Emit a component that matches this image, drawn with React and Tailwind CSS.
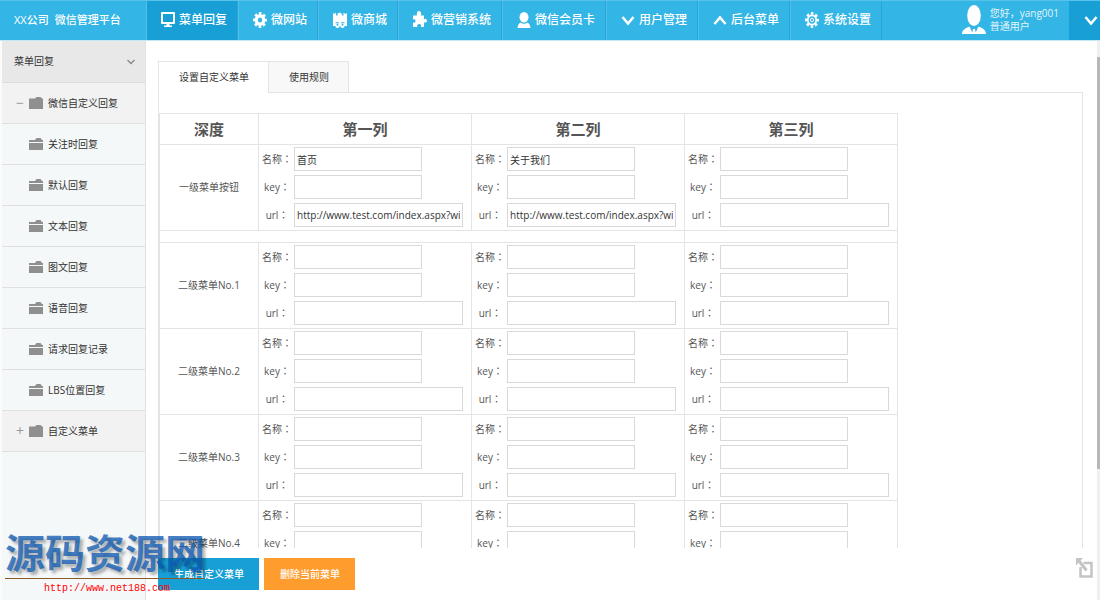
import React, { useState } from 'react';
import clsx from 'clsx';

const GearIcon = ({ thin }) => (
    <svg viewBox="0 0 16 16" className="h-4 w-3.5 shrink-0" preserveAspectRatio="none" fill="none" stroke="currentColor" aria-hidden="true">
        <circle cx="8" cy="8" r={thin ? 4.8 : 4.3} strokeWidth={thin ? 2 : 3.6} />
        {thin && <circle cx="8" cy="8" r="1.800" strokeWidth="1" />}
        <circle cx="8" cy="8" r="6.700" strokeWidth="2.500" strokeDasharray="2.900 2.362" strokeDashoffset="1.450" />
    </svg>
);

const MonitorIcon = () => (
    <svg viewBox="0 0 14 16" className="h-4 w-3.5 shrink-0" fill="currentColor" aria-hidden="true">
        <path fillRule="evenodd" d="M1 0h12a1 1 0 0 1 1 1v10a1 1 0 0 1-1 1H1a1 1 0 0 1-1-1V1a1 1 0 0 1 1-1zm1 2v8h10V2z" />
        <path d="M5.500 12h3v1.500H11q.5 1.500-1 1.500H4q-1.500 0-1-1.500h2.500z" />
    </svg>
);

const ShopIcon = () => (
    <svg viewBox="0 0 14 16" className="h-4 w-3.5 shrink-0" fill="currentColor" aria-hidden="true">
        <path d="M0 1l1.500 1L3 .5v3h1.500V1.500L7 .5l2 1.500v1.500h1.500V.5L12.500 2 14 1v13H0z" />
        <circle cx="4.500" cy="13.800" r="2.200" />
        <circle cx="9.500" cy="13.800" r="2.200" />
        <g fill="#33b5e5">
            <path d="M2.500 10.300h3.500v1H2.500zM8 10.300h3.500v1H8z" />
            <circle cx="4.500" cy="12.800" r="1" />
            <circle cx="9.500" cy="12.800" r="1" />
        </g>
    </svg>
);

const PuzzleIcon = () => (
    <svg viewBox="0 0 14 17" className="h-[17px] w-3.5 shrink-0" fill="currentColor" aria-hidden="true">
        <path d="M0 4.500h4.200C3.500 3.500 3.600 0 6 0s2.500 3.500 1.800 4.500H11v4c1-.7 3-.6 3 1.300s-2 2.200-3 1.400V16H8c.5-1.500 0-3-1.800-3S3.800 14.500 4.300 16H0v-4.500c1.500.5 2.500-.2 2.500-1.500S1.500 8 0 8.500z" />
    </svg>
);

const MemberIcon = () => (
    <svg viewBox="0 0 14 16" className="h-4 w-3.5 shrink-0" fill="currentColor" aria-hidden="true">
        <ellipse cx="7" cy="5.200" rx="4.500" ry="5.200" />
        <path d="M.5 16c.2-3 1.500-4.800 3-5.500 2 1.600 5 1.600 7 0 1.500.7 2.800 2.500 3 5.500z" />
    </svg>
);

const ChevronIcon = ({ up }) => (
    <svg viewBox="0 0 14 16" className="h-4 w-3.5 shrink-0" fill="none" stroke="currentColor" strokeWidth="2.500" aria-hidden="true">
        <path d={up ? 'M1.500 12L7 5.500l5.500 6.500' : 'M1.500 5L7 11.500 12.500 5'} />
    </svg>
);

const AvatarIcon = () => (
    <svg viewBox="0 0 24 29" className="h-[29px] w-6 shrink-0" fill="currentColor" aria-hidden="true">
        <ellipse cx="12" cy="10.500" rx="6.800" ry="10.500" />
        <path d="M0 29c0-3.500 2.500-5.500 7.500-7.500l2.800 6L11 24h2l.7 3.500 2.800-6c5 2 7.500 4 7.500 7.500z" />
    </svg>
);

const FolderIcon = ({ open }) => (
    <svg viewBox="0 0 14 12" className="h-3 w-3.5 shrink-0 text-[#8f8f8f]" fill="currentColor" aria-hidden="true">
        {open ? (
            <path d="M0 2h6l1.500-2h4L13 2h1v2H0zM0 5h14v7H0z" />
        ) : (
            <path d="M0 1.500h6L7.500 0h4L13 1.500h1V12H0z" />
        )}
    </svg>
);

const navItems = [
    { label: '菜单回复', icon: <MonitorIcon /> },
    { label: '微网站', icon: <GearIcon /> },
    { label: '微商城', icon: <ShopIcon /> },
    { label: '微营销系统', icon: <PuzzleIcon /> },
    { label: '微信会员卡', icon: <MemberIcon /> },
    { label: '用户管理', icon: <ChevronIcon /> },
    { label: '后台菜单', icon: <ChevronIcon up /> },
    { label: '系统设置', icon: <GearIcon thin /> },
];

const sideItems = [
    { label: '微信自定义回复', sign: '−', group: true },
    { label: '关注时回复' },
    { label: '默认回复' },
    { label: '文本回复' },
    { label: '图文回复' },
    { label: '语音回复' },
    { label: '请求回复记录' },
    { label: 'LBS位置回复' },
    { label: '自定义菜单', sign: '+', group: true },
];

const columns = ['第一列', '第二列', '第三列'];
const testUrl = 'http://www.test.com/index.aspx?wid=1';

const topValues = [
    { name: '首页', url: testUrl },
    { name: '关于我们', url: testUrl },
    {},
];

const subRows = ['二级菜单No.1', '二级菜单No.2', '二级菜单No.3', '二级菜单No.4', '二级菜单No.5'];

const Field = ({ label, value, wide }) => (
    <label className="flex h-6 items-center">
        <span className="w-[34px] shrink-0 text-center">
            {label}
            {/* the TC face centres the full-width colon */}
            <span className="font-['Noto_Sans_CJK_TC',sans-serif] leading-none">：</span>
        </span>
        <input
            type="text"
            defaultValue={value}
            className={clsx(
                'h-6 border border-[#d9d9d9] bg-white px-0.5 text-[#333] outline-none focus:border-[#33b5e5]',
                wide ? 'w-[169px]' : 'w-32'
            )}
        />
    </label>
);

const MenuCell = ({ values = {} }) => (
    <td className="border border-[#e4e4e4] px-px pt-0.5 pb-[3px]">
        <div className="flex flex-col gap-1">
            <Field label="名称" value={values.name} />
            <Field label="key" value={values.key} />
            <Field label="url" value={values.url} wide />
        </div>
    </td>
);

const MenuRow = ({ title, values = [] }) => (
    <tr>
        <th scope="row" className="border border-[#e4e4e4] text-center font-normal">{title}</th>
        {columns.map((column, i) => (
            <MenuCell key={column} values={values[i]} />
        ))}
    </tr>
);

const Header = () => (
    <header className="flex h-[41px] shrink-0 border-t border-b border-t-[#58c3ea] border-b-[#c4e8f6] bg-[#33b5e5] text-xs text-white">
        <h1 className="flex w-[146px] shrink-0 items-center gap-1.5 pl-3.5 text-[11px] font-medium">
            <span>XX公司</span>
            <span>微信管理平台</span>
        </h1>
        <nav className="flex">
            {navItems.map((item, i) => (
                <a
                    key={item.label}
                    href="#"
                    className={clsx(
                        'flex items-center gap-1 border-r border-l border-r-[#27a5d6] border-l-[#50c0ea] pr-2.5 pb-0.5 pl-3.5 font-medium whitespace-nowrap',
                        i === 0 && 'bg-[#179fd6]'
                    )}
                >
                    {item.icon}
                    {item.label}
                </a>
            ))}
        </nav>
        <div className="ml-auto flex items-center gap-1 pr-2.5 pb-0.5">
            <AvatarIcon />
            <p className="text-[10px] leading-[13px] text-[#e4f5fc]">
                您好，yang001
                <br />
                普通用户
            </p>
        </div>
        <button type="button" aria-label="更多" className="flex w-[31px] items-center justify-end bg-[#179fd6] pr-0.5 pb-0.5">
            <ChevronIcon />
        </button>
    </header>
);

const Sidebar = () => (
    <aside className="w-[146px] shrink-0 border-r border-l-2 border-r-[#e2e2e2] border-l-[#fbfbfb] bg-[#f5f8f8] text-[#333]">
        <button type="button" className="flex h-[42px] w-full items-center justify-between border-b border-[#dcdcdc] bg-[#e8e8e8] pr-2.5 pl-3">
            菜单回复
            <svg viewBox="0 0 8 6" className="h-1.5 w-2" fill="none" stroke="#888" strokeWidth="1.300" aria-hidden="true">
                <path d="M.5 1L4 4.500 7.500 1" />
            </svg>
        </button>
        <ul>
            {sideItems.map((item) => (
                <li key={item.label} className={clsx('border-b border-[#e0e0e0]', item.group && 'bg-[#f2f2f2]')}>
                    <a href="#" className="flex h-10 items-center pl-3.5">
                        <span className="w-[13px] text-sm leading-none text-[#999]">{item.sign}</span>
                        <FolderIcon open={!item.group} />
                        <span className="pl-[5px]">{item.label}</span>
                    </a>
                </li>
            ))}
        </ul>
    </aside>
);

const Watermark = () => (
    <div className="pointer-events-none absolute bottom-1 left-[5px] w-[200px]">
        <p className="border-b border-[#8a5a2b] pb-0.5 text-[40px] leading-[46px] font-bold text-[#0b57b0]/75 [text-shadow:3px_3px_3px_rgba(0,0,0,0.3)]">
            源码资源网
        </p>
        <p className="pt-0.5 pl-1 text-center font-['Liberation_Mono',monospace] text-[10px] leading-[15px] text-[#f00]">
            http://www.net188.com
        </p>
    </div>
);

const App = () => {
    const [tab, setTab] = useState(0);

    return (
        <div className="relative flex h-screen flex-col overflow-hidden bg-white font-['Open_Sans','Noto_Sans_CJK_SC',sans-serif] text-[10px] text-[#555]">
            <Header />
            <div className="flex min-h-0 flex-1">
                <Sidebar />
                <main className="flex min-w-0 flex-1 flex-col pt-5 pl-3">
                    <div className="min-h-0 flex-1 overflow-y-auto pr-3.5 [scrollbar-width:none]">
                        <div className="flex text-[#333]">
                            {['设置自定义菜单', '使用规则'].map((name, i) => (
                                <button
                                    key={name}
                                    type="button"
                                    onClick={() => setTab(i)}
                                    className={clsx(
                                        'h-8 border-t border-r border-[#e4e4e4] pr-[19px] pl-5',
                                        i === 0 && 'border-l',
                                        tab === i ? 'bg-white' : 'border-b bg-[#f8f8f8]'
                                    )}
                                >
                                    {name}
                                </button>
                            ))}
                            <div className="flex-1 border-b border-[#e4e4e4]" />
                        </div>
                        <section className="border-r border-b border-l border-[#e4e4e4] pt-5 pb-5">
                            <table className="w-[739px] table-fixed border-collapse">
                                <colgroup>
                                    <col className="w-[99px]" />
                                    <col />
                                    <col />
                                    <col />
                                </colgroup>
                                <thead>
                                    <tr className="h-[31px] text-[15px] leading-5">
                                        <th className="border border-[#e4e4e4] font-bold">深度</th>
                                        {columns.map((column) => (
                                            <th key={column} className="border border-[#e4e4e4] font-bold">{column}</th>
                                        ))}
                                    </tr>
                                </thead>
                                <tbody>
                                    <MenuRow title="一级菜单按钮" values={topValues} />
                                    <tr className="h-3">
                                        <td colSpan={3} className="border border-[#e4e4e4]" />
                                        <td className="border border-[#e4e4e4]" />
                                    </tr>
                                    {subRows.map((title) => (
                                        <MenuRow key={title} title={title} />
                                    ))}
                                </tbody>
                            </table>
                        </section>
                    </div>
                    <div className="flex h-[52px] shrink-0 items-start gap-[5px] pt-2.5 pr-1">
                        <button type="button" className="h-8 bg-[#179fd6] pr-[15px] pl-4 font-medium text-white">生成自定义菜单</button>
                        <button type="button" className="h-8 bg-[#ff9c2e] pr-[15px] pl-4 font-medium text-white">删除当前菜单</button>
                        <button type="button" aria-label="展开" className="ml-auto">
                            <svg viewBox="0 0 17 20" className="h-5 w-[17px]" fill="none" stroke="#c4c4c4" strokeWidth="2.500" aria-hidden="true">
                                <path d="M7.500 5h8v13.500h-11V9" />
                                <path d="M3 3l7.500 9.500" strokeWidth="3" />
                                <path d="M0 0h7L0 7.500z" fill="#c4c4c4" stroke="none" />
                            </svg>
                        </button>
                    </div>
                </main>
                <div className="w-[3px] shrink-0 bg-[#f0f0f0] pt-4">
                    <div className="h-[412px] bg-[#b8b8b8]" />
                </div>
            </div>
            <Watermark />
        </div>
    );
};

export default App;
